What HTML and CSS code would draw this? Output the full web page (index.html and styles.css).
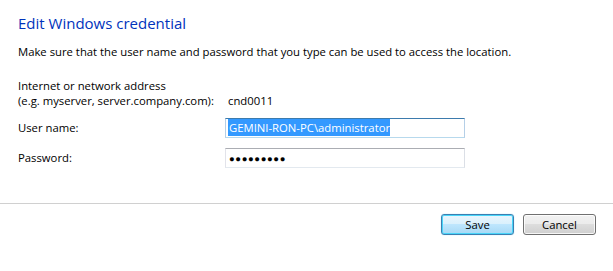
FILE: index.html
```html
<!DOCTYPE html>
<html>
<head>
<meta charset="utf-8">
<link rel="stylesheet" href="styles.css">
</head>
<body>
<div class="dialog">
  <div class="content">
    <h1 class="title">Edit Windows credential</h1>
    <p class="intro">Make sure that the user name and password that you type can be used to access the location.</p>
    <div class="form">
      <div class="label addr">Internet or network address<br>(e.g. myserver, server.company.com):</div>
      <div class="value addr-value">cnd0011</div>
      <div class="label field-label">User name:</div>
      <div class="input focused"><span class="sel">GEMINI-RON-PC\administrator</span></div>
      <div class="label field-label">Password:</div>
      <div class="input"><span class="dots">●●●●●●●●●</span></div>
    </div>
  </div>
  <div class="footer">
    <button class="btn default">Save</button>
    <button class="btn">Cancel</button>
  </div>
</div>
</body>
</html>
```
FILE: styles.css
```css
html, body {
  margin: 0;
  padding: 0;
  background: #ffffff;
}
body {
  font-family: "Open Sans", "Noto Sans", sans-serif;
  font-size: 11.3px;
  color: #000000;
}
.dialog {
  width: 613px;
  height: 271px;
  display: flex;
  flex-direction: column;
}
.content {
  padding: 0 0 0 18px;
  box-sizing: border-box;
  border-bottom: 1px solid #d0d0d0;
  height: 204px;
}
.title {
  margin: 0;
  padding-top: 13px;
  font-size: 15px;
  font-weight: normal;
  color: #0033bc;
  line-height: 20px;
}
.intro {
  margin: 11px 0 0 0;
  line-height: 15px;
}
.form {
  margin-top: 19px;
  display: grid;
  grid-template-columns: 207px 240px;
  align-items: center;
}
.label {
  line-height: 15px;
}
.addr {
  align-self: end;
}
.addr-value {
  align-self: end;
  padding-left: 3px;
  line-height: 15px;
}
.field-label {
  margin-top: 10px;
  line-height: 20px;
}
.input {
  margin-top: 10px;
  height: 20px;
  box-sizing: border-box;
  border: 1px solid #abadb3;
  border-left-color: #e2e3ea;
  border-right-color: #dbdfe6;
  border-bottom-color: #e3e9ef;
  padding: 1px 2px 0 2px;
  line-height: 16px;
  white-space: nowrap;
  overflow: hidden;
}
.input.focused {
  border-color: #3d7bad;
  border-left-color: #b5cfe7;
  border-right-color: #b5cfe7;
  border-bottom-color: #b7d9ed;
  border-top-color: #3d7bad;
}
.sel {
  background: #3399ff;
  color: #ffffff;
  padding: 1px 0 1px 1px;
}
.dots {
  font-size: 9.5px;
  letter-spacing: 0.6px;
  padding-left: 1px;
}
.footer {
  display: flex;
  justify-content: flex-end;
  gap: 9px;
  padding: 10px 17px 0 0;
}
.btn {
  width: 73px;
  height: 21px;
  box-sizing: border-box;
  font-family: "Open Sans", "Noto Sans", sans-serif;
  font-size: 11.3px;
  color: #000;
  border: 1px solid #707070;
  border-radius: 3px;
  background: linear-gradient(#f2f2f2 0%, #ebebeb 50%, #dddddd 50%, #cfcfcf 100%);
  box-shadow: inset 0 0 0 1px rgba(255,255,255,0.8);
  padding: 0;
  line-height: 17px;
}
.btn.default {
  border-color: #3c7fb1;
  background: linear-gradient(#eaf6fd 0%, #d9f0fc 50%, #bee6fd 50%, #a7d9f5 100%);
  box-shadow: inset 0 0 0 1px #48d5f9, 0 0 1px #6fd0f5;
}
```
